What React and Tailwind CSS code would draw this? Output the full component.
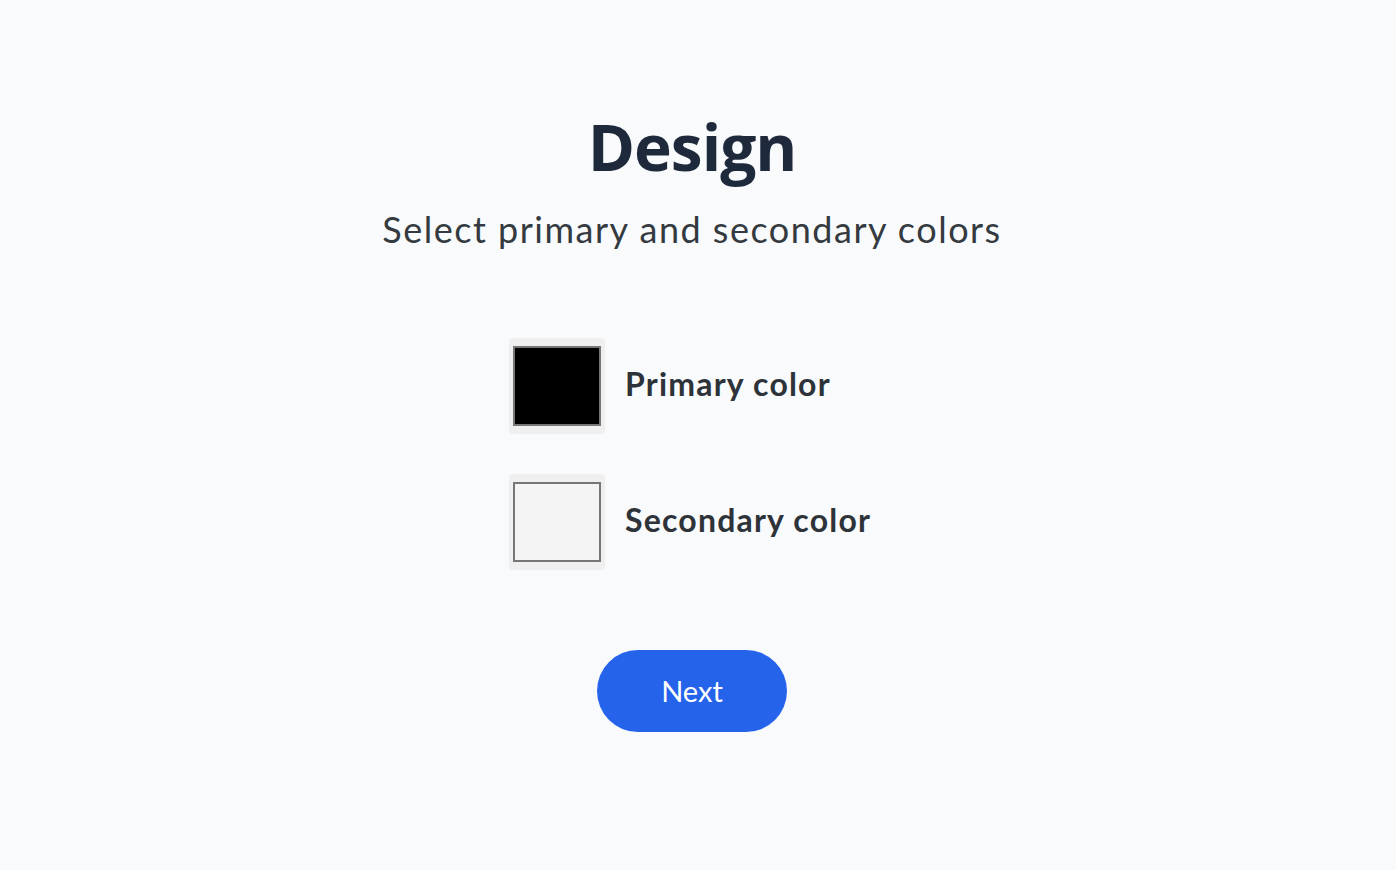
import { useState } from "react";

const ColorRow = ({ color, label }) => (
  <div className="flex items-center gap-5">
    <div className="w-24 h-24 rounded bg-[#efefef] px-1 py-2">
      <div
        className="w-full h-full border-2 border-[#767676]"
        style={{ backgroundColor: color }}
      />
    </div>
    <span className="text-[32px] leading-10 font-bold text-[#2d3339] font-['Lato',sans-serif] tracking-[1.2px] -mt-1">
      {label}
    </span>
  </div>
);

export default function App() {
  const [primary] = useState("#000000");
  const [secondary] = useState("#f4f4f4");

  return (
    <div className="min-h-screen bg-[#f8fafc] flex flex-col items-center pt-[104px] pr-3">
      {/* Header */}
      <h1 className="text-[64px] leading-[86px] font-bold text-[#1e293b] font-['Open_Sans',sans-serif] tracking-[-1px]">
        Design
      </h1>
      <p className="mt-[15px] text-[36px] leading-[48px] text-[#343a40] font-['Lato',sans-serif] tracking-[1.5px]">
        Select primary and secondary colors
      </p>

      {/* Color pickers */}
      <div className="mt-[85px] flex flex-col gap-10 w-[366px]">
        <ColorRow color={primary} label="Primary color" />
        <ColorRow color={secondary} label="Secondary color" />
      </div>

      <button className="mt-20 w-[190px] h-[82px] rounded-full bg-[#2563eb] text-white text-[29px] font-['Lato',sans-serif]">
        Next
      </button>
    </div>
  );
}
